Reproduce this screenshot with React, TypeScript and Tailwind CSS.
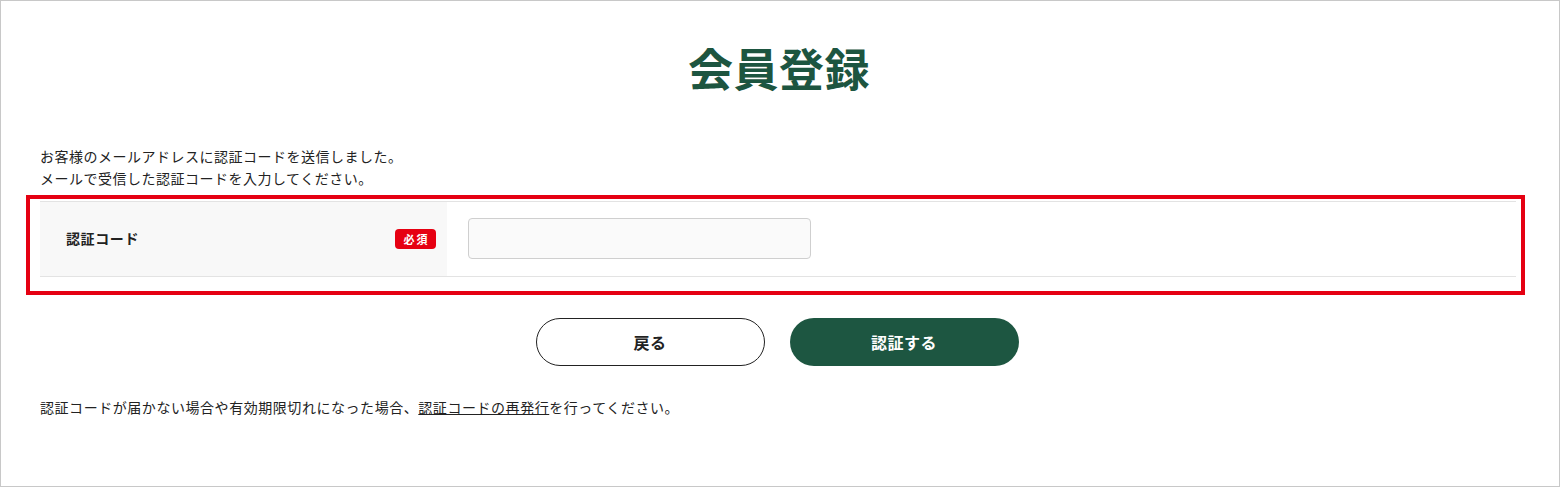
import React from "react";

export default function App() {
  return (
    <div
      className="relative w-[1560px] h-[487px] border border-[#c8c8c8] bg-white text-[#222]"
      style={{ fontFamily: '"Noto Sans CJK JP", "Noto Sans", sans-serif' }}
    >
      <div className="pl-[39px] pr-[43px] pt-[37px]">
        <h1 className="text-center text-[45px] leading-[60px] font-bold text-[#1d5540] pl-[2px] tracking-[0.5px]">
          会員登録
        </h1>
        <div className="mt-[47px] text-[14px] leading-[22px] text-[#222] tracking-[0.5px]">
          <p>お客様のメールアドレスに認証コードを送信しました。</p>
          <p>メールで受信した認証コードを入力してください。</p>
        </div>
        <div className="mt-[12px] flex border-t border-b border-[#e3e3e3]">
          <div className="w-[407px] h-[74px] bg-[#f8f8f8] flex items-center justify-between pl-[26px] pr-[11px]">
            <span className="text-[14px] font-bold text-[#222] tracking-[0.6px] -mt-[2px]">認証コード</span>
            <span className="w-[41px] h-[20px] rounded-[4px] bg-[#e60012] text-white text-[11px] font-bold flex items-center justify-center tracking-[2px] pl-[2px]">
              必須
            </span>
          </div>
          <div className="flex-1 flex items-center pl-[21px]">
            <input
              type="text"
              className="w-[343px] h-[41px] rounded-[4px] border border-[#cfcfcf] bg-[#fafafa] outline-none px-3 -mt-[1px]"
            />
          </div>
        </div>
        <div className="mt-[41px] flex justify-center gap-[25px] pr-[2px]">
          <button className="w-[229px] h-[48px] rounded-full border border-[#222] bg-white text-[16px] font-bold text-[#222] tracking-[0.5px]">
            戻る
          </button>
          <button className="w-[229px] h-[48px] rounded-full bg-[#1d5641] text-[16px] font-bold text-white tracking-[0.5px]">
            認証する
          </button>
        </div>
        <p className="mt-[30px] text-[14px] leading-[22px] text-[#222] tracking-[0.55px]">
          認証コードが届かない場合や有効期限切れになった場合、
          <a className="underline" href="#">
            認証コードの再発行
          </a>
          を行ってください。
        </p>
      </div>
      <div className="absolute left-[25px] top-[194px] w-[1499px] h-[100px] border-[4px] border-[#e50012] pointer-events-none" />
    </div>
  );
}
